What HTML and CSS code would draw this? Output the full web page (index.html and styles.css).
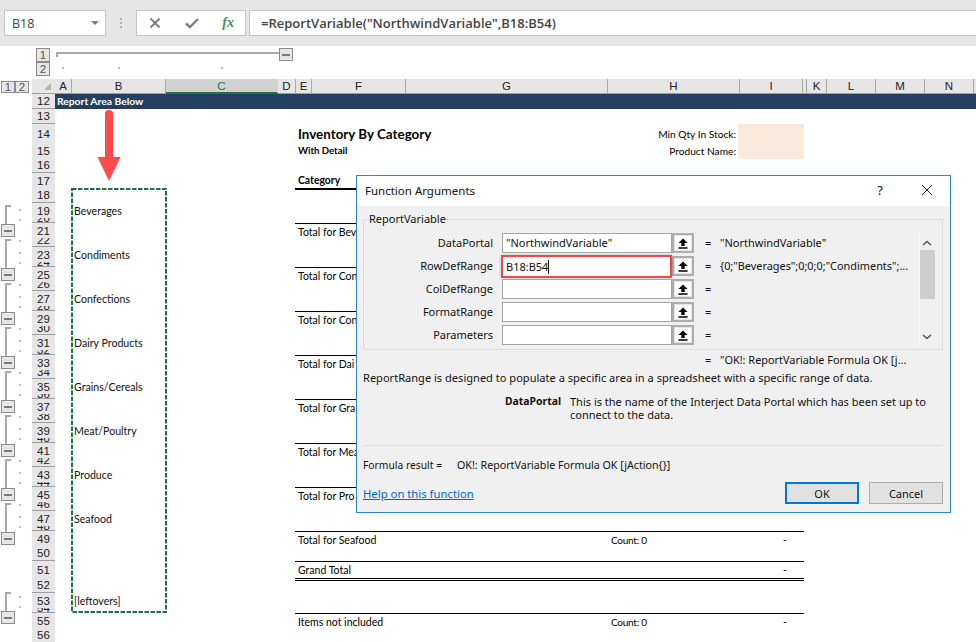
FILE: index.html
```html
<!DOCTYPE html>
<html lang="en">
<head>
<meta charset="utf-8">
<title>Function Arguments</title>
<link rel="stylesheet" href="styles.css">
</head>
<body>
<svg class="defs" width="0" height="0" aria-hidden="true"><symbol id="up" viewBox="0 0 12 13"><path d="M6 0.5 L11.5 6 H8 V9.5 H4 V6 H0.5 Z M0.5 11 H11.5 V12.8 H0.5 Z" fill="#000"/></symbol></svg>
<div class="app">
  <div class="fbar">
    <div class="namebox"><span>B18</span><i class="caret"></i></div>
    <div class="grip"><i></i><i></i><i></i></div>
    <div class="fnbox">
      <svg class="ic" width="14" height="14" viewBox="0 0 14 14"><path d="M2.5 2.5 L11.5 11.5 M11.5 2.5 L2.5 11.5" stroke="#7f7f7f" stroke-width="2" fill="none"/></svg>
      <svg class="ic" width="16" height="14" viewBox="0 0 16 14"><path d="M2 7.5 L6 11 L14 3" stroke="#7f7f7f" stroke-width="2.4" fill="none"/></svg>
      <span class="fx">fx</span>
    </div>
    <div class="formula">=ReportVariable("NorthwindVariable",B18:B54)</div>
  </div>

  <div class="otop">
    <div class="levels"><b class="lv">1</b><b class="lv">2</b></div>
    <div class="track">
      <div class="trow"><div class="tline"></div><i class="minus"></i></div>
      <div class="tdots"><i></i><i></i><i></i></div>
    </div>
  </div>

  <div class="chead">
    <div class="lvcell"><b class="lv2">1</b><b class="lv2">2</b></div>
    <div class="corner"><svg width="7" height="7" viewBox="0 0 7 7"><polygon points="7,0 7,7 0,7" fill="#b4b4b4"/></svg></div>
    <div class="ch w17">A</div>
    <div class="ch w94">B</div>
    <div class="ch w112 sel">C</div>
    <div class="ch w17b">D</div>
    <div class="ch w16">E</div>
    <div class="ch w94">F</div>
    <div class="ch w202">G</div>
    <div class="ch w132">H</div>
    <div class="ch w63">I</div>
    <div class="ch w4"></div>
    <div class="ch w20">K</div>
    <div class="ch w49">L</div>
    <div class="ch w49">M</div>
    <div class="ch w49">N</div>
    <div class="ch rest"></div>
  </div>

  <div class="sheet">
    <div class="gutter">
      <div class="grp first"><i class="d d1"></i><i class="d d2"></i><i class="minus"></i></div>
      <div class="grp"><i class="d"></i><i class="d d3"></i><i class="d d2"></i><i class="minus"></i></div>
      <div class="grp"><i class="d"></i><i class="d d3"></i><i class="d d2"></i><i class="minus"></i></div>
      <div class="grp"><i class="d"></i><i class="d d3"></i><i class="d d2"></i><i class="minus"></i></div>
      <div class="grp"><i class="d"></i><i class="d d3"></i><i class="d d2"></i><i class="minus"></i></div>
      <div class="grp"><i class="d"></i><i class="d d3"></i><i class="d d2"></i><i class="minus"></i></div>
      <div class="grp"><i class="d"></i><i class="d d3"></i><i class="d d2"></i><i class="minus"></i></div>
      <div class="grp"><i class="d"></i><i class="d d3"></i><i class="d d2"></i><i class="minus"></i></div>
      <div class="grp first last"><i class="d d1"></i><i class="d d2"></i><i class="minus"></i></div>
    </div>
    <div class="rows">
      <div class="row h15"><div class="rh">12</div><div class="band">Report Area Below</div></div>
      <div class="row h15"><div class="rh">13</div></div>
      <div class="row h19"><div class="rh">14</div><div class="report"><div class="title">Inventory By Category</div><div class="param">Min Qty In Stock:</div><div class="fill"></div></div></div>
      <div class="row h15"><div class="rh">15</div><div class="report"><div class="sub">With Detail</div><div class="param">Product Name:</div><div class="fill"></div></div></div>
      <div class="row h15"><div class="rh">16</div></div>
      <div class="row h15"><div class="rh">17</div><div class="report heavy"><div class="cat">Category</div></div></div>
      <div class="row h15"><div class="rh">18</div></div>
      <div class="row h15"><div class="rh">19</div><div class="b">Beverages</div></div>
      <div class="row h5"><div class="rh">20</div></div>
      <div class="row h15"><div class="rh">21</div><div class="report total"><div class="lbl">Total for Bev</div></div></div>
      <div class="row h9"><div class="rh">22</div></div>
      <div class="row h15"><div class="rh">23</div><div class="b">Condiments</div></div>
      <div class="row h5"><div class="rh">24</div></div>
      <div class="row h15"><div class="rh">25</div><div class="report total"><div class="lbl">Total for Con</div></div></div>
      <div class="row h9"><div class="rh">26</div></div>
      <div class="row h15"><div class="rh">27</div><div class="b">Confections</div></div>
      <div class="row h5"><div class="rh">28</div></div>
      <div class="row h15"><div class="rh">29</div><div class="report total"><div class="lbl">Total for Con</div></div></div>
      <div class="row h9"><div class="rh">30</div></div>
      <div class="row h15"><div class="rh">31</div><div class="b">Dairy Products</div></div>
      <div class="row h5"><div class="rh">32</div></div>
      <div class="row h15"><div class="rh">33</div><div class="report total"><div class="lbl">Total for Dai</div></div></div>
      <div class="row h9"><div class="rh">34</div></div>
      <div class="row h15"><div class="rh">35</div><div class="b">Grains/Cereals</div></div>
      <div class="row h5"><div class="rh">36</div></div>
      <div class="row h15"><div class="rh">37</div><div class="report total"><div class="lbl">Total for Gra</div></div></div>
      <div class="row h9"><div class="rh">38</div></div>
      <div class="row h15"><div class="rh">39</div><div class="b">Meat/Poultry</div></div>
      <div class="row h5"><div class="rh">40</div></div>
      <div class="row h15"><div class="rh">41</div><div class="report total"><div class="lbl">Total for Mea</div></div></div>
      <div class="row h9"><div class="rh">42</div></div>
      <div class="row h15"><div class="rh">43</div><div class="b">Produce</div></div>
      <div class="row h5"><div class="rh">44</div></div>
      <div class="row h15"><div class="rh">45</div><div class="report total"><div class="lbl">Total for Pro</div></div></div>
      <div class="row h9"><div class="rh">46</div></div>
      <div class="row h15"><div class="rh">47</div><div class="b">Seafood</div></div>
      <div class="row h5"><div class="rh">48</div></div>
      <div class="row h15"><div class="rh">49</div><div class="report total"><div class="lbl">Total for Seafood</div><div class="count">Count: 0</div><div class="dash">-</div></div></div>
      <div class="row h15"><div class="rh">50</div></div>
      <div class="row h16"><div class="rh">51</div><div class="report total grand"><div class="lbl">Grand Total</div><div class="count"></div><div class="dash">-</div></div></div>
      <div class="row h16"><div class="rh">52</div></div>
      <div class="row h15"><div class="rh">53</div><div class="b">[leftovers]</div></div>
      <div class="row h5"><div class="rh">54</div></div>
      <div class="row h15"><div class="rh">55</div><div class="report total"><div class="lbl">Items not included</div><div class="count">Count: 0</div><div class="dash">-</div></div></div>
      <div class="row h15"><div class="rh">56</div></div>
    </div>
  </div>

  <svg class="ants" width="96" height="425" viewBox="0 0 96 425"><rect x="1" y="1" width="94" height="423" fill="none" stroke="#1f7246" stroke-width="2" stroke-dasharray="4.5 1.5"/></svg>
  <svg class="arrow" width="26" height="74" viewBox="0 0 26 74"><path d="M9 5 Q9 1 13 1 Q17 1 17 5 V48 H24.5 L13 72 L1.5 48 H9 Z" fill="#fe4a4c"/></svg>

  <div class="dialog">
    <div class="dtitle">
      <span class="dt">Function Arguments</span>
      <span class="q">?</span>
      <svg class="close" width="12" height="12" viewBox="0 0 12 12"><path d="M1 1 L11 11 M11 1 L1 11" stroke="#222" stroke-width="1" fill="none"/></svg>
    </div>
    <div class="dbody">
      <div class="gbox">
        <span class="legend">ReportVariable</span>
        <div class="fields">
          <label class="fl">DataPortal</label><div class="inp">"NorthwindVariable"</div><div class="rbtn"><svg width="10" height="11"><use href="#up"/></svg></div><span class="eq">=</span><span class="val">"NorthwindVariable"</span>
          <div class="sb"><svg class="chev" width="10" height="6" viewBox="0 0 10 6"><path d="M1 5 L5 1.5 L9 5" stroke="#555" stroke-width="1.6" fill="none"/></svg><div class="thumb"></div><svg class="chev end" width="10" height="6" viewBox="0 0 10 6"><path d="M1 1 L5 4.5 L9 1" stroke="#555" stroke-width="1.6" fill="none"/></svg></div>
          <label class="fl">RowDefRange</label><div class="inp focus">B18:B54<i class="cursor"></i></div><div class="rbtn"><svg width="10" height="11"><use href="#up"/></svg></div><span class="eq">=</span><span class="val val-tight">{0;"Beverages";0;0;0;"Condiments";...</span>
          <label class="fl">ColDefRange</label><div class="inp"></div><div class="rbtn"><svg width="10" height="11"><use href="#up"/></svg></div><span class="eq">=</span><span class="val"></span>
          <label class="fl">FormatRange</label><div class="inp"></div><div class="rbtn"><svg width="10" height="11"><use href="#up"/></svg></div><span class="eq">=</span><span class="val"></span>
          <label class="fl">Parameters</label><div class="inp"></div><div class="rbtn"><svg width="10" height="11"><use href="#up"/></svg></div><span class="eq">=</span><span class="val"></span>
        </div>
      </div>
      <div class="result"><span class="eq">=</span><span class="val val-tight">"OK!: ReportVariable Formula OK [j...</span></div>
      <p class="desc">ReportRange is designed to populate a specific area in a spreadsheet with a specific range of data.</p>
      <div class="arg"><b>DataPortal</b><p>This is the name of the Interject Data Portal which has been set up to<br>connect to the data.</p></div>
      <div class="sep"></div>
      <div class="fres"><span class="frl">Formula result =</span><span>OK!: ReportVariable Formula OK [jAction{}]</span></div>
      <div class="dfoot">
        <a class="help" href="#">Help on this function</a>
        <div class="btns"><button class="btn ok">OK</button><button class="btn">Cancel</button></div>
      </div>
    </div>
  </div>
</div>
</body>
</html>
```

FILE: styles.css
```css
* { box-sizing: border-box; }
html, body { margin: 0; padding: 0; height: 642px; overflow: hidden; background: #fff; }
.defs { position: absolute; }
.app { position: relative; width: 976px; height: 642px; overflow: hidden; font-family: "Lato", "Liberation Sans", sans-serif; color: #000; }

/* formula bar */
.fbar { height: 46px; background: #e6e6e6; display: flex; align-items: flex-start; padding: 10px 0 0 4px; font-family: "Open Sans", sans-serif; color: #444; }
.namebox { width: 102px; height: 26px; background: #fff; border: 1px solid #c6c6c6; display: flex; align-items: center; justify-content: space-between; padding: 0 6px 0 7px; font-size: 12.5px; }
.caret { width: 0; height: 0; border: 4px solid transparent; border-top: 4px solid #808080; margin-top: 4px; }
.grip { width: 30px; height: 26px; display: flex; flex-direction: column; align-items: center; justify-content: center; gap: 2px; }
.grip i { width: 2px; height: 2px; background: #b4b4b4; }
.fnbox { width: 110px; height: 26px; background: #fff; border: 1px solid #c6c6c6; display: flex; align-items: center; justify-content: space-between; padding: 0 11px 0 11px; }
.fx { font: italic bold 14px "Liberation Serif", serif; color: #3f8f63; }
.formula { margin-left: 3px; flex: 1; height: 26px; background: #fff; border: 1px solid #c6c6c6; border-right: 0; padding-left: 11px; font-size: 13.02px; font-weight: 600; line-height: 24px; color: #444; white-space: nowrap; }

/* top outline */
.otop { height: 33px; display: flex; padding: 2px 0 0 36px; }
.levels { width: 14px; display: flex; flex-direction: column; }
.lv, .lv2 { font: 400 11.5px "Liberation Sans", sans-serif; color: #555; background: #e6e6e6; border: 1px solid #8c8c8c; display: flex; align-items: center; justify-content: center; }
.lv { width: 14px; height: 14px; }
.track { margin-left: 6px; width: 237px; }
.trow { display: flex; align-items: flex-start; height: 14px; }
.tline { position: relative; width: 223px; height: 2px; margin-top: 4px; background: #aaa; }
.tline::before { content: ""; position: absolute; left: 0; top: 0; width: 2px; height: 5px; background: #aaa; }
.tdots { display: flex; padding: 5px 0 0 6px; gap: 54px; }
.tdots i { width: 2px; height: 2px; background: #bbb; }
.tdots i:last-child { margin-left: 47px; }
.minus { width: 14px; height: 13px; flex: none; background: #e6e6e6; border: 1px solid #8c8c8c; display: flex; align-items: center; justify-content: center; }
.minus::before { content: ""; width: 8px; height: 2px; background: #7a7a7a; }

/* column header */
.chead { height: 15px; display: flex; }
.lvcell { width: 32px; padding: 2px 0 0 1px; display: flex; background: #fff; }
.lv2 { width: 14px; height: 12px; }
.corner { width: 23px; background: #e6e6e6; border-bottom: 1px solid #9e9e9e; padding: 4px 0 0 12px; }
.corner svg { display: block; }
.ch { font: 11.5px/14px "Liberation Sans", sans-serif; text-align: center; background: #e6e6e6; border-right: 1px solid #a8a8a8; border-bottom: 1px solid #9e9e9e; color: #222; }
.w17 { width: 17px; } .w17b { width: 18px; } .w94 { width: 94px; } .w112 { width: 112px; } .w16 { width: 16px; }
.w202 { width: 202px; } .w132 { width: 132px; } .w63 { width: 63px; } .w4 { width: 4px; } .w20 { width: 20px; } .w49 { width: 49px; }
.rest { flex: 1; border-right: 0; }
.sel { background: #d2d2d2; color: #217346; border-right-color: #d2d2d2; border-bottom: 2px solid #217346; }

/* sheet */
.sheet { display: flex; }
.gutter { width: 32px; padding-top: 111px; flex: none; }
.grp { position: relative; height: 42px; margin: 0 0 2px 5px; border-left: 2px solid #aaa; display: flex; flex-direction: column; }
.grp.first { height: 32px; margin-bottom: 2px; }
.grp.last { margin-top: 47px; }
.grp::before { content: ""; position: absolute; left: 0; top: 0; width: 4px; height: 2px; background: #aaa; }
.d { display: block; width: 2px; height: 2px; margin: 1px 0 0 12px; background: #bbb; }
.d.d1 { margin-top: 4px; }
.d.d2 { margin-top: 8px; }
.d.d3 { margin-top: 10px; }
.grp .minus { margin: auto 0 0 -6px; }
.rows { flex: 1; }
.row { display: grid; grid-template-columns: 23px 17px 94px 112px 17px 509px 1fr; }
.h5 { height: 5px; } .h9 { height: 9px; } .h15 { height: 15px; } .h16 { height: 16px; } .h19 { height: 19px; }
.rh { grid-column: 1; overflow: hidden; background: #e6e6e6; border-bottom: 1px solid #9e9e9e; font: 11.5px/14px "Liberation Sans", sans-serif; color: #222; display: flex; align-items: center; justify-content: center; }
.h5 .rh { align-items: flex-start; line-height: 0; }
.h9 .rh { align-items: flex-start; line-height: 4.5px; }
.band { grid-column: 2 / -1; background: #243f60; color: #fff; font-size: 10.3px; font-weight: 700; line-height: 15px; padding-left: 2px; white-space: nowrap; }
.b { grid-column: 3; padding-left: 2px; font-size: 10.6px; line-height: 17px; white-space: nowrap; color: #111; }
.report { grid-column: 6; display: grid; grid-template-columns: 312px 131px 66px; font-size: 10.5px; line-height: 16px; }
.title { font-size: 13.4px; font-weight: 700; line-height: 20px; padding-left: 3px; }
.sub { font-weight: 700; font-size: 9.6px; padding-left: 3px; }
.param { text-align: right; padding-right: 2px; white-space: nowrap; font-size: 10.2px; }
.h19 .param { line-height: 21px; }
.fill { background: #fbe9dc; }
.heavy { border-bottom: 2px solid #000; }
.cat { font-weight: 700; font-size: 10.4px; padding-left: 3px; line-height: 15px; }
.total { border-top: 1px solid #000; }
.lbl { padding-left: 3px; white-space: nowrap; line-height: 16px; }
.count { padding-left: 4px; line-height: 16px; white-space: nowrap; font-size: 10px; letter-spacing: -0.25px; }
.dash { text-align: right; padding-right: 17px; line-height: 16px; }
.grand { border-bottom: 3px double #000; margin-bottom: -2px; }

/* overlays */
.ants { position: absolute; left: 71px; top: 188px; }
.arrow { position: absolute; left: 96px; top: 109px; }

/* dialog */
.dialog { position: absolute; left: 356px; top: 175px; width: 595px; height: 338px; border: 1px solid #2a86d4; background: #f0f0f0; display: flex; flex-direction: column; font-family: "Noto Sans", sans-serif; font-size: 11px; color: #111; }
.dtitle { height: 30px; flex: none; background: #fff; display: flex; align-items: center; padding: 0 0 2px 8px; font-size: 11.5px; }
.dt { flex: 1; }
.q { font-size: 13px; margin-right: 38px; }
.close { margin-right: 17px; }
.dbody { padding: 13px 7px 0 6px; flex: 1; display: flex; flex-direction: column; }
.gbox { position: relative; height: 131px; border: 1px solid #dcdcdc; padding: 13px 0 0 0; flex: none; }
.legend { position: absolute; left: 4px; top: -9px; background: #f0f0f0; padding: 0 1px; line-height: 16px; }
.fields { display: grid; grid-template-columns: 138px 170px 22px 26px 199px 15px; grid-auto-rows: 20px; row-gap: 3px; align-items: center; }
.fl { text-align: right; padding: 0 9px 2px 0; }
.inp { position: relative; height: 20px; background: #fff; border: 1px solid #a5a5a5; line-height: 18px; padding-left: 3px; }
.focus { border: 2px solid #f0484a; height: 23px; margin: 0 0 0 -1px; line-height: 19px; padding-left: 3px; box-shadow: 0 0 3px rgba(0,0,0,.2); }
.cursor { display: inline-block; width: 1px; height: 14px; background: #000; vertical-align: -3px; }
.rbtn { width: 22px; height: 20px; background: #fff; border: 2px solid #adadad; box-shadow: inset 0 0 0 1px #e4e4e4; display: flex; align-items: center; justify-content: center; }
.eq { padding: 0 0 2px 11px; }
.val { white-space: nowrap; padding-bottom: 2px; }
.val-tight { font-size: 10.9px; }
.sb { grid-column: 6; grid-row: 1 / span 5; height: 112px; align-self: start; display: flex; flex-direction: column; align-items: center; padding-top: 7px; background: #f0f0f0; border-left: 1px solid #fafafa; }
.chev { flex: none; }
.chev.end { margin-top: auto; margin-bottom: 5px; }
.thumb { width: 15px; height: 49px; margin-top: 4px; background: #cdcdcd; }
.result { display: grid; grid-template-columns: 331px 26px auto; height: 16px; margin-top: 2px; line-height: 16px; }
.result .eq { grid-column: 2; padding-bottom: 0; }
.result .val { padding-bottom: 0; }
.desc { margin: 2px 0 0; line-height: 16px; font-size: 11.07px; }
.arg { display: flex; margin-top: 9px; line-height: 13px; }
.arg b { width: 198px; text-align: right; font-weight: 700; flex: none; font-size: 10.4px; }
.arg p { margin: 0 0 0 9px; }
.sep { height: 1px; background: #dcdcdc; margin-top: 24px; flex: none; }
.fres { display: flex; margin-top: 11px; line-height: 16px; font-size: 10.7px; }
.frl { width: 94px; flex: none; font-size: 10.3px; }
.dfoot { display: flex; justify-content: space-between; align-items: center; margin-top: 9px; }
.help { color: #0066cc; font-size: 11.3px; }
.btns { display: flex; gap: 10px; }
.btn { width: 74px; height: 22px; padding: 0; background: #e1e1e1; border: 1px solid #adadad; font: inherit; color: #111; }
.ok { border: 2px solid #0078d7; }
```
